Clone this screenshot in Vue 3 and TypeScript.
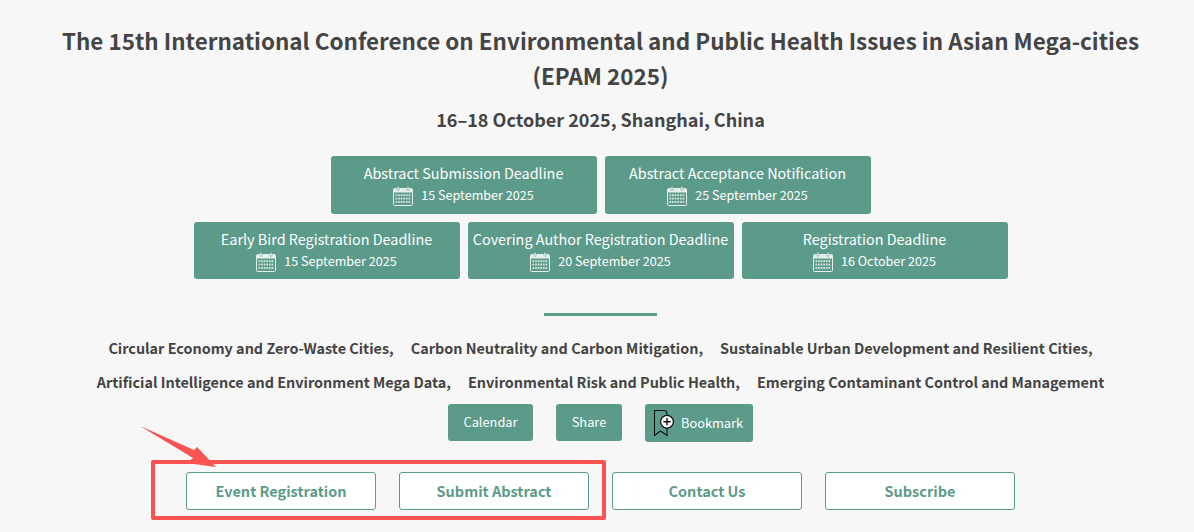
<script setup lang="ts">
interface Deadline { title: string; date: string }
const rows: Deadline[][] = [
  [
    { title: 'Abstract Submission Deadline', date: '15 September 2025' },
    { title: 'Abstract Acceptance Notification', date: '25 September 2025' },
  ],
  [
    { title: 'Early Bird Registration Deadline', date: '15 September 2025' },
    { title: 'Covering Author Registration Deadline', date: '20 September 2025' },
    { title: 'Registration Deadline', date: '16 October 2025' },
  ],
]
const topics: string[][] = [
  ['Circular Economy and Zero-Waste Cities,', 'Carbon Neutrality and Carbon Mitigation,', 'Sustainable Urban Development and Resilient Cities,'],
  ['Artificial Intelligence and Environment Mega Data,', 'Environmental Risk and Public Health,', 'Emerging Contaminant Control and Management'],
]
const actions = ['Event Registration', 'Submit Abstract', 'Contact Us', 'Subscribe']
const cells = [0, 1, 2, 3, 4, 5, 6, 7, 8, 9, 10, 11, 12, 13, 14, 15, 16, 17]
</script>

<template>
  <main class="page">
    <h1 class="title">The 15th International Conference on Environmental and Public Health Issues in Asian Mega-cities<br />(EPAM 2025)</h1>
    <h2 class="when">16–18 October 2025, Shanghai, China</h2>

    <section class="deadlines">
      <div v-for="(row, r) in rows" :key="r" class="deadline-row">
        <div v-for="d in row" :key="d.title" class="deadline" :class="{ tall: r === 0 }">
          <div class="deadline-title">{{ d.title }}</div>
          <div class="deadline-date">
            <svg class="cal" width="20" height="20" viewBox="0 0 20 20" fill="none">
              <rect x="0.5" y="2.5" width="19" height="17" rx="1" stroke="#e4efea" />
              <rect x="1" y="3" width="18" height="3.5" fill="#e4efea" />
              <rect x="4" y="0.5" width="2" height="4" rx="1" fill="#e4efea" stroke="#5c9b8a" stroke-width="0.5" />
              <rect x="14" y="0.5" width="2" height="4" rx="1" fill="#e4efea" stroke="#5c9b8a" stroke-width="0.5" />
              <rect v-for="c in cells" :key="c" :x="2.5 + (c % 6) * 2.6" :y="8.2 + Math.floor(c / 6) * 3.4" width="1.7" height="1.9" fill="#d3e5df" />
            </svg>
            <span>{{ d.date }}</span>
          </div>
        </div>
      </div>
    </section>

    <div class="rule"></div>

    <section class="topics">
      <div v-for="(line, i) in topics" :key="i" class="topic-line">
        <span v-for="t in line" :key="t">{{ t }}</span>
      </div>
    </section>

    <div class="tools">
      <a class="tool calendar">Calendar</a>
      <a class="tool share">Share</a>
      <a class="tool bookmark">
        <svg width="24" height="28" viewBox="0 0 24 28" fill="none">
          <path d="M1.5 1.5H11C13 1.5 14 2.5 14 5V26.5L7.5 22L1.5 26.5Z" stroke="#111" stroke-width="1.1" />
          <circle cx="14" cy="12.7" r="6.4" fill="#fff" stroke="#111" stroke-width="1.3" />
          <path d="M10.4 12.7H17.6M14 9.1V16.3" stroke="#111" stroke-width="1.4" />
        </svg>
        <span>Bookmark</span>
      </a>
    </div>

    <div class="actions">
      <a v-for="a in actions" :key="a" class="action">{{ a }}</a>
    </div>

    <div class="red-box"></div>
    <svg class="red-arrow" width="90" height="50" viewBox="0 0 90 50">
      <path d="M1 1L55 25L58 22L77 42L48 38L54 33Z" fill="#fb5252" />
    </svg>
  </main>
</template>

<style scoped>
.page {
  position: relative;
  box-sizing: border-box;
  width: 1194px;
  height: 532px;
  overflow: hidden;
  padding: 23px 0 0 7px;
  background: #f7f7f7;
  font-family: "Noto Sans CJK SC", "Noto Sans", sans-serif;
  color: #444;
  text-align: center;
}
.title {
  margin: 0;
  font-size: 22.45px;
  line-height: 35px;
  font-weight: 700;
}
.when {
  margin: 11px 0 0;
  font-size: 18px;
  line-height: 30px;
  font-weight: 700;
}
.deadlines {
  margin-top: 22px;
  display: flex;
  flex-direction: column;
  gap: 8px;
}
.deadline-row {
  display: flex;
  justify-content: center;
  gap: 8px;
}
.deadline {
  box-sizing: border-box;
  width: 266px;
  height: 57px;
  padding-top: 5px;
  border-radius: 3px;
  background: #5c9b8a;
  color: #fff;
}
.deadline.tall {
  height: 58px;
}
.deadline-title {
  font-size: 14.4px;
  line-height: 23px;
  white-space: nowrap;
}
.deadline-date {
  display: flex;
  justify-content: center;
  align-items: center;
  gap: 8px;
  height: 21px;
  font-size: 12.6px;
}
.cal {
  margin-top: 2px;
}
.rule {
  width: 113px;
  height: 3px;
  margin: 34px auto 0;
  background: #5c9b8a;
}
.topics {
  margin-top: 15px;
  font-size: 14.4px;
  font-weight: 700;
}
.topic-line {
  display: flex;
  justify-content: center;
  gap: 17px;
  height: 34px;
  line-height: 34px;
}
.tools {
  display: flex;
  justify-content: center;
  align-items: flex-start;
  gap: 23px;
  margin-top: 5px;
}
.tool {
  box-sizing: border-box;
  display: flex;
  align-items: center;
  justify-content: center;
  height: 37px;
  padding-bottom: 2px;
  border-radius: 3px;
  background: #5c9b8a;
  color: #fff;
  font-size: 12.8px;
}
.calendar { width: 85px; }
.share { width: 66px; }
.bookmark {
  width: 108px;
  height: 38px;
  gap: 4px;
  padding-left: 8px;
  padding-bottom: 0;
  justify-content: flex-start;
}
.bookmark span {
  margin-bottom: 2px;
}
.actions {
  display: flex;
  justify-content: center;
  gap: 23px;
  margin-top: 30px;
}
.action {
  box-sizing: border-box;
  width: 190px;
  height: 38px;
  line-height: 35px;
  border: 1px solid #5c9b8a;
  border-radius: 3px;
  background: #fff;
  color: #5c9b8a;
  font-size: 14.5px;
  font-weight: 700;
}
.red-box {
  position: absolute;
  left: 151px;
  top: 460px;
  width: 455px;
  height: 60px;
  box-sizing: border-box;
  border: 4px solid #fb5252;
  border-radius: 2px;
}
.red-arrow {
  position: absolute;
  left: 139px;
  top: 425px;
}
</style>
